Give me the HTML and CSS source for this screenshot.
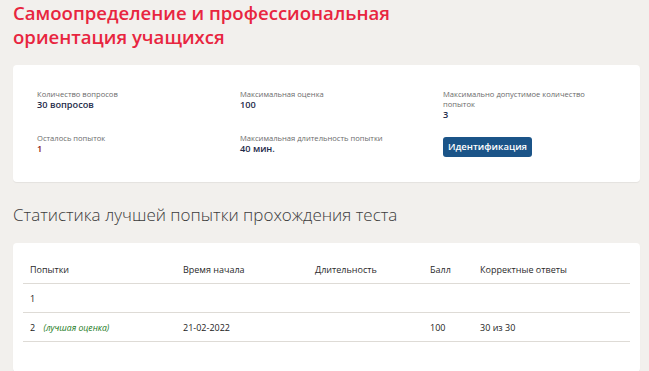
FILE: index.html
```html
<!DOCTYPE html>
<html lang="ru">
<head>
<meta charset="utf-8">
<link rel="stylesheet" href="styles.css">
</head>
<body>
<div class="page">
  <h1 class="title">Самоопределение и профессиональная<br>ориентация учащихся</h1>
  <section class="card info">
    <div class="grid">
      <div class="item"><div class="label">Количество вопросов</div><div class="value">30 вопросов</div></div>
      <div class="item"><div class="label">Максимальная оценка</div><div class="value">100</div></div>
      <div class="item"><div class="label">Максимально допустимое количество попыток</div><div class="value">3</div></div>
      <div class="item"><div class="label">Осталось попыток</div><div class="value red">1</div></div>
      <div class="item"><div class="label">Максимальная длительность попытки</div><div class="value">40 мин.</div></div>
      <div class="item"><button class="btn">Идентификация</button></div>
    </div>
  </section>
  <h2 class="subtitle">Статистика лучшей попытки прохождения теста</h2>
  <section class="card stats">
    <table class="table">
      <thead>
        <tr><th class="c1">Попытки</th><th class="c2">Время начала</th><th class="c3">Длительность</th><th class="c4">Балл</th><th>Корректные ответы</th></tr>
      </thead>
      <tbody>
        <tr><td class="num">1</td><td></td><td></td><td></td><td></td></tr>
        <tr><td>2 <span class="best">(лучшая оценка)</span></td><td>21-02-2022</td><td></td><td>100</td><td>30 из 30</td></tr>
      </tbody>
    </table>
  </section>
</div>
</body>
</html>
```

FILE: styles.css
```css
* { box-sizing: border-box; }
html, body { margin: 0; padding: 0; }
body {
  background: #f2f0ed;
  font-family: "Open Sans", "Liberation Sans", sans-serif;
  color: #1e2b4a;
}
.page { padding: 1px 9px 0 13px; }
.title {
  margin: 0;
  font-size: 18.6px;
  line-height: 23.5px;
  font-weight: 600;
  color: #e8253f;
}
.card {
  background: #fff;
  border-radius: 4px;
  box-shadow: 0 1px 1px rgba(0,0,0,0.06);
}
.info {
  margin-top: 17px;
  padding: 24px 24px 24px 24px;
  height: 117px;
}
.grid {
  display: grid;
  grid-template-columns: 203px 203px 160px;
  row-gap: 13px;
}
.label {
  font-size: 7.6px;
  line-height: 10px;
  color: #6b6b6b;
}
.value {
  font-size: 9.2px;
  line-height: 11px;
  font-weight: 600;
  color: #1e2b4a;
}
.value.red { color: #8b1a1a; }
.btn {
  background: #1b5488;
  color: #fff;
  border: none;
  border-radius: 3px;
  font-family: "Open Sans", sans-serif;
  font-size: 9.5px;
  font-weight: 600;
  height: 20px;
  width: 89px;
  padding: 0;
  margin-top: -2px;
}
.subtitle {
  margin: 21px 0 0 0;
  font-size: 17px;
  line-height: 24px;
  font-weight: 300;
  color: #3b3b3b;
}
.stats {
  margin-top: 16px;
  padding: 16px 10px 30px 10px;
}
.table {
  width: 100%;
  border-collapse: collapse;
  font-size: 9px;
}
.table th {
  text-align: left;
  font-weight: 500;
  line-height: 12px;
  color: #2a2a2a;
  padding: 5px 7px 7px 7px;
  border-bottom: 1px solid #dedbd6;
}
.table td {
  text-align: left;
  color: #222;
  padding: 0 7px;
  height: 29px;
  border-bottom: 1px solid #dedbd6;
}
.c1 { width: 153px; }
.c2 { width: 132px; }
.c3 { width: 115px; }
.c4 { width: 50px; }
.num { color: #7a3b1a; }
.best { font-style: italic; color: #1a7a1a; font-size: 8.6px; margin-left: 6px; }
```
